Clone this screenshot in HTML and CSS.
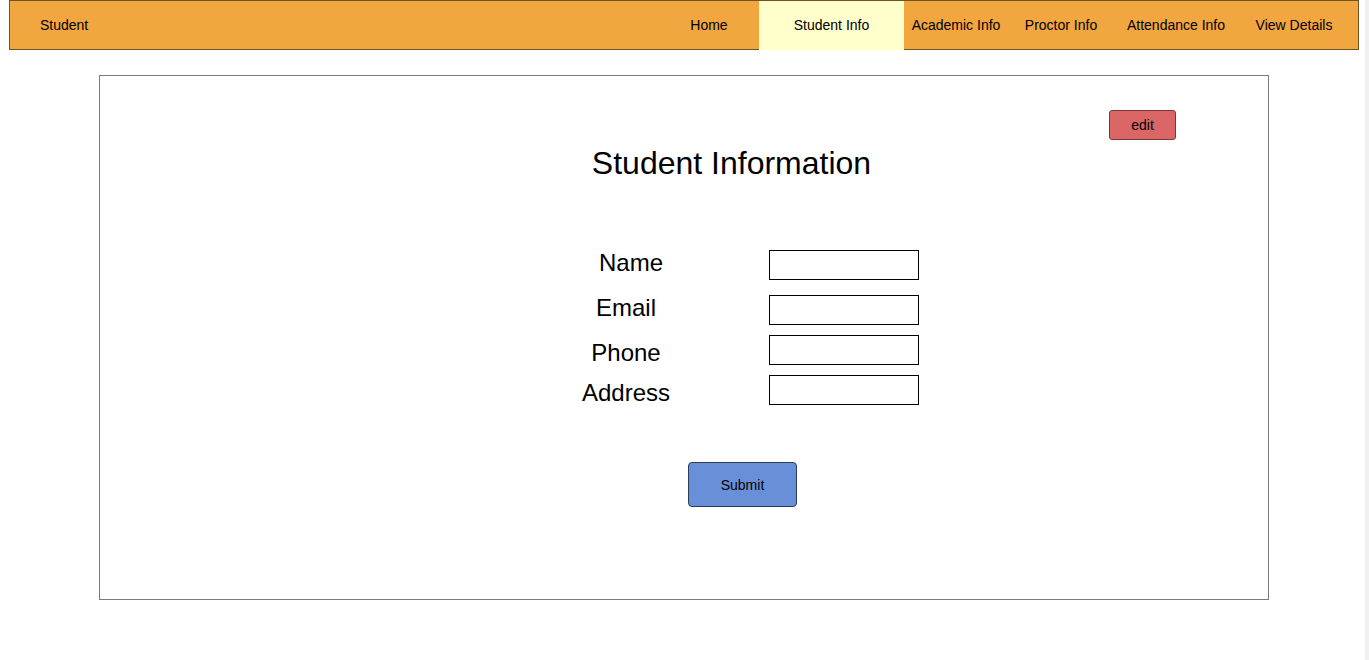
FILE: index.html
```html
<!DOCTYPE html>
<html lang="en">
<head>
<meta charset="utf-8">
<title>Student Information</title>
<link rel="stylesheet" href="styles.css">
</head>
<body>
<header class="topbar">
  <div class="brand">Student</div>
  <nav class="nav">
    <a class="nav-item w-home">Home</a>
    <a class="nav-item w-student active">Student Info</a>
    <a class="nav-item w-academic">Academic Info</a>
    <a class="nav-item w-proctor">Proctor Info</a>
    <a class="nav-item w-attendance">Attendance Info</a>
    <a class="nav-item w-view">View Details</a>
  </nav>
</header>
<main class="card">
  <div class="card-top">
    <button class="btn-edit">edit</button>
  </div>
  <h1 class="title">Student Information</h1>
  <form class="form">
    <div class="row r-name"><label class="label">Name</label><input class="field" type="text"></div>
    <div class="row r-email"><label class="label">Email</label><input class="field" type="text"></div>
    <div class="row r-phone"><label class="label label-low">Phone</label><input class="field" type="text"></div>
    <div class="row r-address"><label class="label label-low">Address</label><input class="field" type="text"></div>
    <div class="actions"><button type="button" class="btn-submit">Submit</button></div>
  </form>
</main>
<div class="scroll-strip"></div>
</body>
</html>
```
FILE: styles.css
```css
* { box-sizing: border-box; }
html, body { margin: 0; padding: 0; background: #ffffff; }
body {
  font-family: "Liberation Sans", Arial, sans-serif;
  color: #000;
  padding: 0 10px 0 9px;
  width: 1369px;
}
.topbar {
  display: flex;
  align-items: stretch;
  height: 50px;
  width: 1350px;
  background: #f2a640;
  border: 1px solid #6e5424;
  font-size: 14px;
}
.brand {
  flex: 1;
  display: flex;
  align-items: center;
  padding-left: 30px;
}
.nav { display: flex; align-items: stretch; margin-right: 8px; margin-bottom: -1px; }
.nav-item {
  display: flex;
  align-items: center;
  justify-content: center;
  padding-bottom: 1px;
  color: #000;
  text-decoration: none;
}
.nav-item.active { background: #ffffcc; }
.w-home { width: 100px; }
.w-student { width: 145px; }
.w-academic { width: 104px; }
.w-proctor { width: 106px; }
.w-attendance { width: 124px; }
.w-view { width: 112px; }

.card {
  margin: 25px 0 0 90px;
  width: 1170px;
  height: 525px;
  border: 1px solid #7a7a7a;
}
.card-top {
  display: flex;
  justify-content: flex-end;
  padding: 34px 92px 0 0;
}
.btn-edit {
  width: 67px;
  height: 30px;
  background: #db6666;
  border: 1px solid #7d3535;
  border-radius: 3px;
  font-family: "Liberation Sans", Arial, sans-serif;
  font-size: 14px;
  color: #000;
  padding: 0 0 1px;
}
.title {
  margin: 4px 0 0 0;
  text-align: center;
  font-weight: normal;
  font-size: 32px;
  line-height: 38px;
  padding-left: 95px;
}
.form {
  display: flex;
  flex-direction: column;
  margin-top: 68px;
}
.row {
  display: flex;
  align-items: center;
  height: 30px;
}
.r-email { margin-top: 15px; }
.r-phone { margin-top: 10px; }
.r-address { margin-top: 10px; }
.label {
  width: 288px;
  margin-left: 382px;
  text-align: center;
  font-size: 24px;
  line-height: 28px;
  padding-bottom: 4px;
}
.label-low { padding-bottom: 0; padding-top: 6px; }
.r-name .label { padding-left: 10px; }
.field {
  margin-left: -1px;
  width: 150px;
  height: 30px;
  border: 1px solid #000;
  background: #fff;
}
.actions {
  display: flex;
  margin-top: 57px;
  padding-left: 588px;
}
.btn-submit {
  width: 109px;
  height: 45px;
  background: #6a8fd9;
  border: 1px solid #2c3b5c;
  border-radius: 4px;
  font-family: "Liberation Sans", Arial, sans-serif;
  font-size: 14px;
  color: #000;
}
.scroll-strip {
  position: fixed;
  top: 0;
  right: 0;
  width: 4px;
  height: 100%;
  background: #f0f0f0;
}
```
